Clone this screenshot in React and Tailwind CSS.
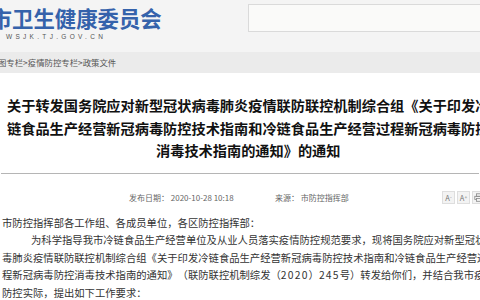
export default function App() {
  const cjk = "font-['Noto_Sans_CJK_SC',sans-serif]";
  return (
    <div className={`w-[480px] h-[300px] overflow-hidden bg-white ${cjk} [text-spacing-trim:space-all]`}>
      <header className="h-[52px] bg-[#f4f4f4] flex">
        <div className="w-[248px] shrink-0">
          <div className="-ml-[52.2px] mt-[7px] text-[21.4px] leading-none font-bold text-[#3562ab] whitespace-nowrap">
            天津市卫生健康委员会
          </div>
          <div className="ml-[6px] mt-[5px] text-[6.5px] leading-[8px] tracking-[3.3px] text-[#555] font-['Liberation_Sans',sans-serif] whitespace-nowrap">
            WSJK.TJ.GOV.CN
          </div>
        </div>
        <div className="mt-[4px] h-[28px] flex-1 -mr-[10px] border border-[#dadada] bg-[#fafaf9]" />
      </header>

      <nav className="h-[21px] bg-[#ebebeb] flex items-center overflow-hidden">
        <div className="-ml-[2px] text-[8.4px] leading-none text-[#555] whitespace-nowrap">
          图专栏&gt;疫情防控专栏&gt;政策文件
        </div>
      </nav>

      <section className="pt-[21px] text-[14.2px] leading-[22.5px] font-bold text-[#111] whitespace-nowrap">
        <div className="pl-[7px]">关于转发国务院应对新型冠状病毒肺炎疫情联防联控机制综合组《关于印发冷</div>
        <div className="pl-[7px]">链食品生产经营新冠病毒防控技术指南和冷链食品生产经营过程新冠病毒防控</div>
        <div className="pl-[156px]">消毒技术指南的通知》的通知</div>
      </section>

      <div className="mt-[11.5px] mx-[1px] h-px bg-[#b5b5b5]" />

      <div className="mt-[17px] h-[13px] flex items-center text-[8px] leading-[13px] text-[#666] whitespace-nowrap">
        <div className="pl-[129px] w-[275px] shrink-0">发布日期： 2020-10-28 10:18</div>
        <div className="w-[167px] shrink-0">来源： 市防控指挥部</div>
        <div className="flex gap-[2px] shrink-0">
          <div className="w-[13px] h-[13px] bg-[#f3f3f3] border border-[#dedede] flex items-center justify-center text-[7.5px] leading-none text-[#777]">
            A<span className="text-[5px] -mt-[3px]">-</span>
          </div>
          <div className="w-[13px] h-[13px] bg-[#f3f3f3] border border-[#dedede] flex items-center justify-center text-[7.5px] leading-none text-[#777]">
            A<span className="text-[5px] -mt-[3px]">+</span>
          </div>
          <div className="w-[13px] h-[13px] bg-[#f3f3f3] border border-[#dedede] flex items-center justify-center">
            <svg width="9" height="9" viewBox="0 0 9 9" fill="none" stroke="#888" strokeWidth="0.8">
              <rect x="2.5" y="0.8" width="4" height="2.5" />
              <rect x="0.8" y="3.3" width="7.4" height="3.2" />
              <rect x="2.5" y="5.5" width="4" height="2.8" fill="#f3f3f3" />
            </svg>
          </div>
        </div>
      </div>

      <article className="mt-[10px] text-[10.33px] leading-[17.4px] text-[#333] whitespace-nowrap">
        <div className="pl-[2px]">市防控指挥部各工作组、各成员单位，各区防控指挥部：</div>
        <div className="pl-[31px]">为科学指导我市冷链食品生产经营单位及从业人员落实疫情防控规范要求，现将国务院应对新型冠状病</div>
        <div className="pl-[2px]">毒肺炎疫情联防联控机制综合组《关于印发冷链食品生产经营新冠病毒防控技术指南和冷链食品生产经营过</div>
        <div className="pl-[2px]">
          程新冠病毒防控消毒技术指南的通知》（联防联控机制综发（<span className="tracking-[1.2px]">2020</span>）<span className="tracking-[1.2px]">245</span>号）转发给你们，并结合我市疫情
        </div>
        <div className="pl-[2px]">防控实际，提出如下工作要求：</div>
      </article>
    </div>
  );
}
